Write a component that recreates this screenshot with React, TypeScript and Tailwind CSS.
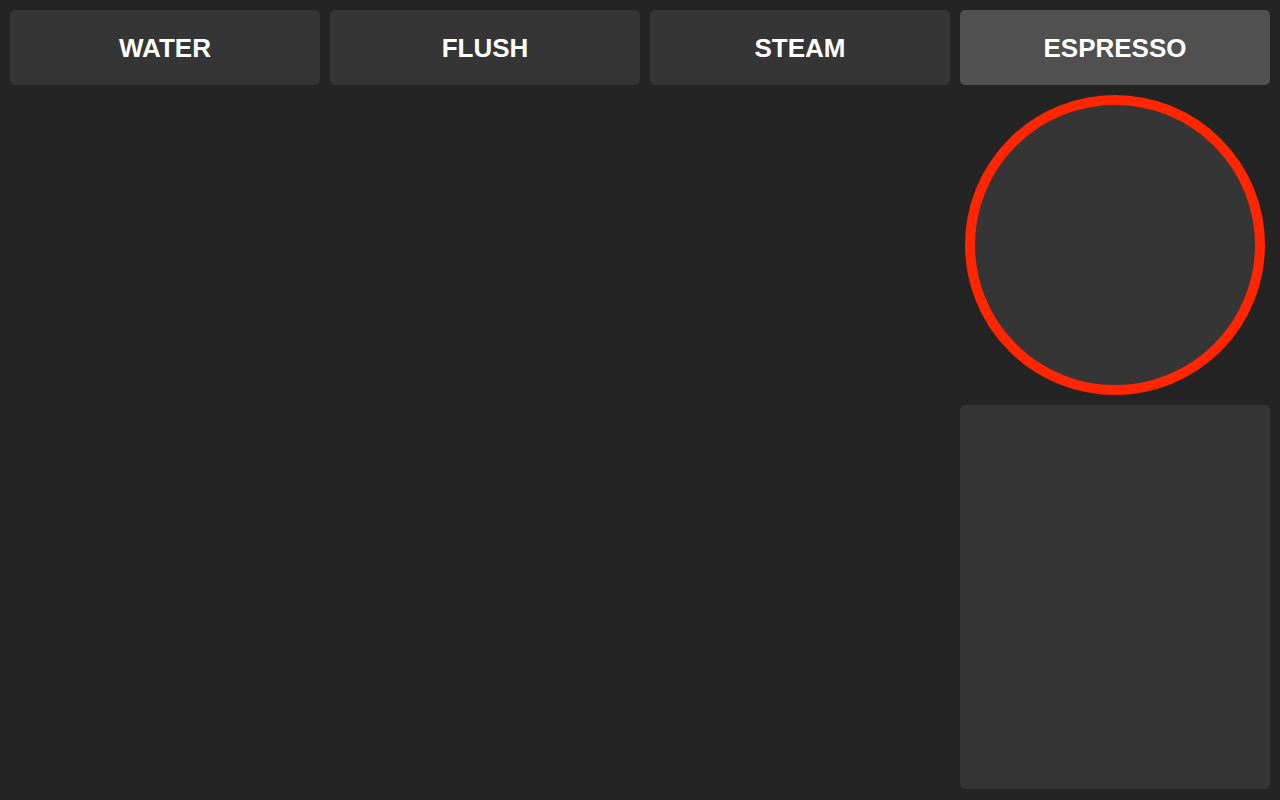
import React from "react";

export default function App() {
  const tabs = [
    { label: "WATER", w: "w-[310px]", active: false },
    { label: "FLUSH", w: "w-[310px]", active: false },
    { label: "STEAM", w: "w-[300px]", active: false },
    { label: "ESPRESSO", w: "w-[310px]", active: true },
  ];
  return (
    <div
      className="w-[1280px] h-[800px] bg-[#242424] flex flex-col p-[10px] gap-[10px] overflow-hidden"
      style={{ fontFamily: '"Liberation Sans", Arial, sans-serif' }}
    >
      <div className="flex gap-[10px] h-[75px] shrink-0">
        {tabs.map((t) => (
          <div
            key={t.label}
            className={`${t.w} h-full rounded-[5px] flex items-center justify-center pt-[2px] text-white font-bold text-[26px] ${
              t.active ? "bg-[#505050]" : "bg-[#353535]"
            }`}
          >
            {t.label}
          </div>
        ))}
      </div>
      <div className="flex-1 flex justify-end min-h-0">
        <div className="w-[310px] flex flex-col gap-[10px] pb-[1px]">
          <div className="flex justify-center shrink-0">
            <div className="w-[300px] h-[300px] rounded-full border-[10px] border-[#ff2600] bg-[#353535]" />
          </div>
          <div className="flex-1 rounded-[5px] bg-[#353535]" />
        </div>
      </div>
    </div>
  );
}
